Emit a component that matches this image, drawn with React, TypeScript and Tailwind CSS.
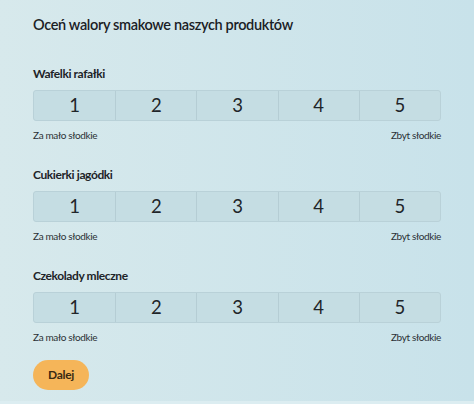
const products = ["Wafelki rafałki", "Cukierki jagódki", "Czekolady mleczne"]

function Scale({ label }: { label: string }) {
  return (
    <section className="mb-[24px]">
      <h2 className="mb-[7px] text-[12px] font-bold leading-[18px] tracking-[-0.4px] text-[#1d2328]">{label}</h2>
      <div className="grid h-[31px] grid-cols-5 overflow-hidden rounded-[3px] border border-[#b9d1d8] bg-[#c5dde3]">
        {[1, 2, 3, 4, 5].map((n) => (
          <button
            key={n}
            className="flex items-center justify-center border-l border-[#b5cdd4] text-[18.5px] leading-none text-[#1f2529] first:border-l-0"
          >
            {n}
          </button>
        ))}
      </div>
      <div className="mt-[7px] flex justify-between text-[10px] leading-[14px] tracking-[-0.35px] text-[#2a3035]">
        <span>Za mało słodkie</span>
        <span>Zbyt słodkie</span>
      </div>
    </section>
  )
}

export default function App() {
  return (
    <div className="min-h-[404px] bg-[#dcedf1] font-['Lato','Open_Sans',sans-serif]">
      <div className="h-[401px] bg-gradient-to-r from-[#d7e9ec] to-[#c8e2ea] px-[33px] pt-[13px]">
        <h1 className="mb-[28px] text-[14.5px] font-semibold leading-[24px] tracking-[-0.35px] text-[#1a2025]">
          Oceń walory smakowe naszych produktów
        </h1>
        {products.map((p) => (
          <Scale key={p} label={p} />
        ))}
        <button className="-mt-[8px] block h-[30px] w-[56px] rounded-full bg-[#f5b559] text-[12px] font-bold tracking-[-0.3px] text-[#3a2a12]">
          Dalej
        </button>
      </div>
    </div>
  )
}
